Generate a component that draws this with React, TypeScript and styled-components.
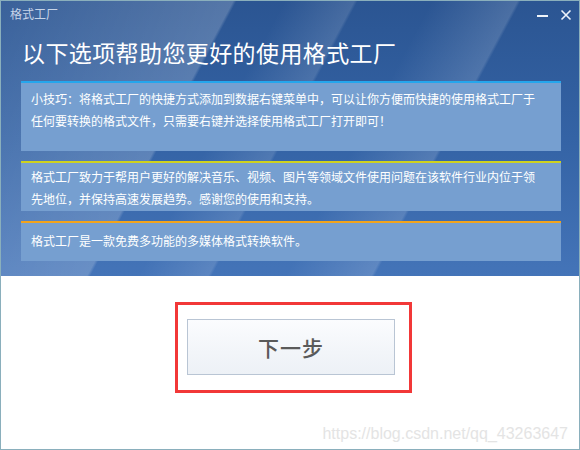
import { createGlobalStyle, styled } from "styled-components";

const GlobalStyle = createGlobalStyle`
  html, body {
    margin: 0;
    padding: 0;
    background: #ffffff;
  }
  body {
    font-family: "Noto Sans CJK SC", "Noto Sans", sans-serif;
  }
`;

const Window = styled.div`
  position: relative;
  width: 580px;
  height: 450px;
  box-sizing: border-box;
  border: 1px solid #8aafbc;
  background: #ffffff;
  display: flex;
  flex-direction: column;
  overflow: hidden;
`;

const Header = styled.section`
  height: 275px;
  box-sizing: border-box;
  padding: 0 19px 0 19px;
  display: flex;
  flex-direction: column;
  background:
    linear-gradient(
      118deg,
      rgba(255, 255, 255, 0.07) 0px,
      rgba(255, 255, 255, 0.2) 205px,
      rgba(255, 255, 255, 0) 208px,
      rgba(255, 255, 255, 0) 250px,
      rgba(255, 255, 255, 0.13) 312px,
      rgba(255, 255, 255, 0) 315px,
      rgba(255, 255, 255, 0) 380px,
      rgba(255, 255, 255, 0.15) 456px,
      rgba(255, 255, 255, 0) 459px,
      rgba(255, 255, 255, 0) 640px
    ),
    linear-gradient(180deg, #2b5592 0%, #3463a5 50%, #4474b8 100%);
`;

const TitleBar = styled.div`
  height: 28px;
  display: flex;
  align-items: center;
  justify-content: space-between;
  margin: 0 -12px 0 -10px;
`;

const TitleText = styled.span`
  font-size: 12px;
  color: #c6d4e8;
  line-height: 14px;
  margin-top: -2px;
`;

const Controls = styled.div`
  display: flex;
  align-items: center;
  gap: 12px;
  color: #eef3fa;
`;

const Heading = styled.h1`
  margin: 8px 0 0 2px;
  font-size: 23px;
  font-weight: 400;
  line-height: 30px;
  color: #ffffff;
  letter-spacing: 0.4px;
`;

const PanelList = styled.div`
  display: flex;
  flex-direction: column;
  gap: 10px;
  margin-top: 14px;
  width: 540px;
  margin-left: 1px;
`;

const Panel = styled.div<{ $line: string; $h: number; $top: number }>`
  height: ${(p) => p.$h}px;
  box-sizing: border-box;
  border-top: 2px solid ${(p) => p.$line};
  background: #769fd0;
  padding: ${(p) => p.$top}px 10px 0 10px;
  font-size: 12px;
  line-height: 22px;
  color: #ffffff;
  white-space: nowrap;
`;

const Lower = styled.section`
  flex: 1;
  padding: 26px 0 0 174px;
`;

const Highlight = styled.div`
  width: 237px;
  height: 91px;
  box-sizing: border-box;
  border: 3px solid #f23838;
  padding: 14px 14px 15px 9px;
`;

const NextButton = styled.button`
  width: 100%;
  height: 100%;
  box-sizing: border-box;
  border: 1px solid #b9c5d4;
  background: linear-gradient(180deg, #fbfcfe 0%, #f2f5f9 60%, #edf1f6 100%);
  font-family: "Noto Sans CJK SC", "Noto Sans", sans-serif;
  font-size: 21px;
  font-weight: 500;
  color: #5a5a5a;
  letter-spacing: 1px;
  cursor: pointer;
`;

const Watermark = styled.span`
  position: absolute;
  right: 11px;
  bottom: 6px;
  font-family: "Liberation Sans", Arial, sans-serif;
  font-size: 16px;
  color: #e4e4e4;
`;

const App = () => {
  return (
    <>
      <GlobalStyle />
      <Window>
        <Header>
          <TitleBar>
            <TitleText>格式工厂</TitleText>
            <Controls>
              <svg width="12" height="12" viewBox="0 0 12 12">
                <rect x="1" y="6" width="11" height="2" fill="currentColor" />
              </svg>
              <svg width="12" height="12" viewBox="0 0 12 12">
                <path
                  d="M1.5 1.5 L10.5 10.5 M10.5 1.5 L1.5 10.5"
                  stroke="currentColor"
                  strokeWidth="1.6"
                />
              </svg>
            </Controls>
          </TitleBar>
          <Heading>以下选项帮助您更好的使用格式工厂</Heading>
          <PanelList>
            <Panel $line="#25a6ec" $h={70} $top={5}>
              小技巧：将格式工厂的快捷方式添加到数据右键菜单中，可以让你方便而快捷的使用格式工厂于
              <br />
              任何要转换的格式文件，只需要右键并选择使用格式工厂打开即可！
            </Panel>
            <Panel $line="#cfd21e" $h={50} $top={3}>
              格式工厂致力于帮用户更好的解决音乐、视频、图片等领域文件使用问题在该软件行业内位于领
              <br />
              先地位，并保持高速发展趋势。感谢您的使用和支持。
            </Panel>
            <Panel $line="#f2a41c" $h={40} $top={7}>
              格式工厂是一款免费多功能的多媒体格式转换软件。
            </Panel>
          </PanelList>
        </Header>
        <Lower>
          <Highlight>
            <NextButton type="button">下一步</NextButton>
          </Highlight>
        </Lower>
        <Watermark>https://blog.csdn.net/qq_43263647</Watermark>
      </Window>
    </>
  );
};

export default App;
